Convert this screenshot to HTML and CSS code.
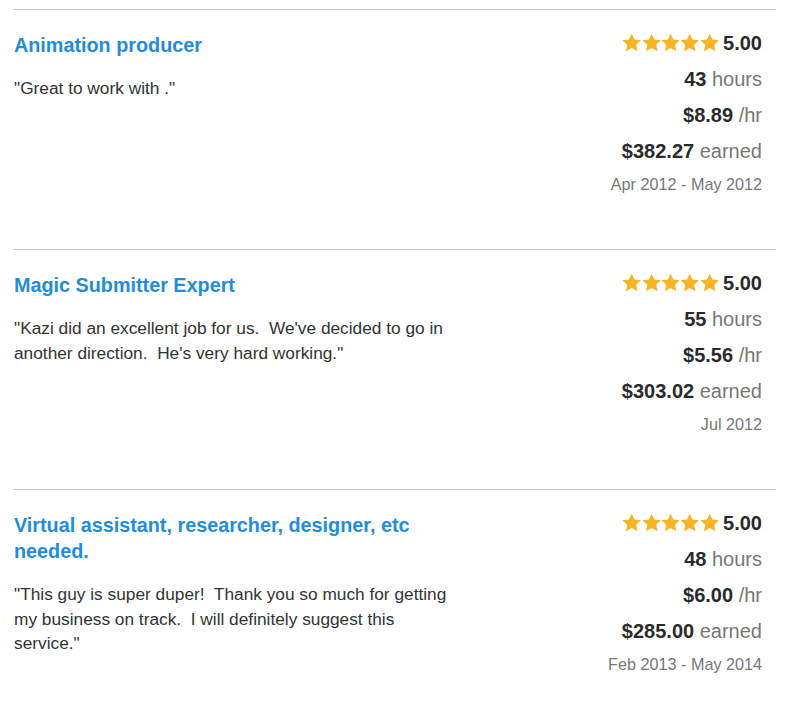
FILE: index.html
```html
<!DOCTYPE html>
<html lang="en">
<head>
  <meta charset="UTF-8">
  <title>Work history</title>
  <link rel="stylesheet" href="styles.css">
</head>
<body>
  <svg width="0" height="0" class="defs">
    <defs>
      <symbol id="star" viewBox="0 0 24 24">
        <polygon points="12,0.8 15.41,8.11 23.41,9.09 17.52,14.59 19.05,22.51 12,18.6 4.95,22.51 6.48,14.59 0.59,9.09 8.59,8.11"/>
      </symbol>
    </defs>
  </svg>

  <div class="history">
    <div class="review">
      <div class="job">
        <h3 class="title">Animation producer</h3>
        <p class="quote">"Great to work with ."</p>
      </div>
      <div class="stats">
        <div class="row rating">
          <span class="stars">
            <svg><use href="#star"/></svg><svg><use href="#star"/></svg><svg><use href="#star"/></svg><svg><use href="#star"/></svg><svg><use href="#star"/></svg>
          </span>
          <b>5.00</b>
        </div>
        <div class="row"><b>43</b> hours</div>
        <div class="row"><b>$8.89</b> /hr</div>
        <div class="row"><b>$382.27</b> earned</div>
        <div class="date">Apr 2012 - May 2012</div>
      </div>
    </div>

    <div class="review">
      <div class="job">
        <h3 class="title">Magic Submitter Expert</h3>
        <p class="quote">"Kazi did an excellent job for us.&nbsp; We've decided to go in another direction.&nbsp; He's very hard working."</p>
      </div>
      <div class="stats">
        <div class="row rating">
          <span class="stars">
            <svg><use href="#star"/></svg><svg><use href="#star"/></svg><svg><use href="#star"/></svg><svg><use href="#star"/></svg><svg><use href="#star"/></svg>
          </span>
          <b>5.00</b>
        </div>
        <div class="row"><b>55</b> hours</div>
        <div class="row"><b>$5.56</b> /hr</div>
        <div class="row"><b>$303.02</b> earned</div>
        <div class="date">Jul 2012</div>
      </div>
    </div>

    <div class="review">
      <div class="job">
        <h3 class="title">Virtual assistant, researcher, designer, etc needed.</h3>
        <p class="quote">"This guy is super duper!&nbsp; Thank you so much for getting my business on track.&nbsp; I will definitely suggest this service."</p>
      </div>
      <div class="stats">
        <div class="row rating">
          <span class="stars">
            <svg><use href="#star"/></svg><svg><use href="#star"/></svg><svg><use href="#star"/></svg><svg><use href="#star"/></svg><svg><use href="#star"/></svg>
          </span>
          <b>5.00</b>
        </div>
        <div class="row"><b>48</b> hours</div>
        <div class="row"><b>$6.00</b> /hr</div>
        <div class="row"><b>$285.00</b> earned</div>
        <div class="date">Feb 2013 - May 2014</div>
      </div>
    </div>
  </div>
</body>
</html>
```

FILE: styles.css
```css
body { margin: 0; background: #fff; font-family: "Liberation Sans", Arial, sans-serif; color: #333; }
.defs { position: absolute; }
.history { padding: 9px 24px 0 14px; width: 762px; }
.review { height: 240px; box-sizing: border-box; border-top: 1px solid #c8c8c8; padding: 15px 14px 0 0; display: flex; justify-content: space-between; }
.job { width: 450px; }
.title { margin: 7px 0 0; font-size: 19.8px; line-height: 26px; font-weight: bold; color: #1f8ddc; }
.quote { margin: 18px 0 0; font-size: 17.3px; line-height: 24.7px; color: #333; }
.stats { text-align: right; font-size: 20px; color: #777; }
.row { line-height: 36px; white-space: nowrap; }
.row b { color: #2a2a2a; }
.rating { display: flex; align-items: center; justify-content: flex-end; height: 36px; }
.stars { display: inline-flex; margin-right: 4px; }
.stars svg { width: 19.4px; height: 19.4px; fill: #f7b424; }
.date { font-size: 16.2px; line-height: 30px; color: #777; }
```
